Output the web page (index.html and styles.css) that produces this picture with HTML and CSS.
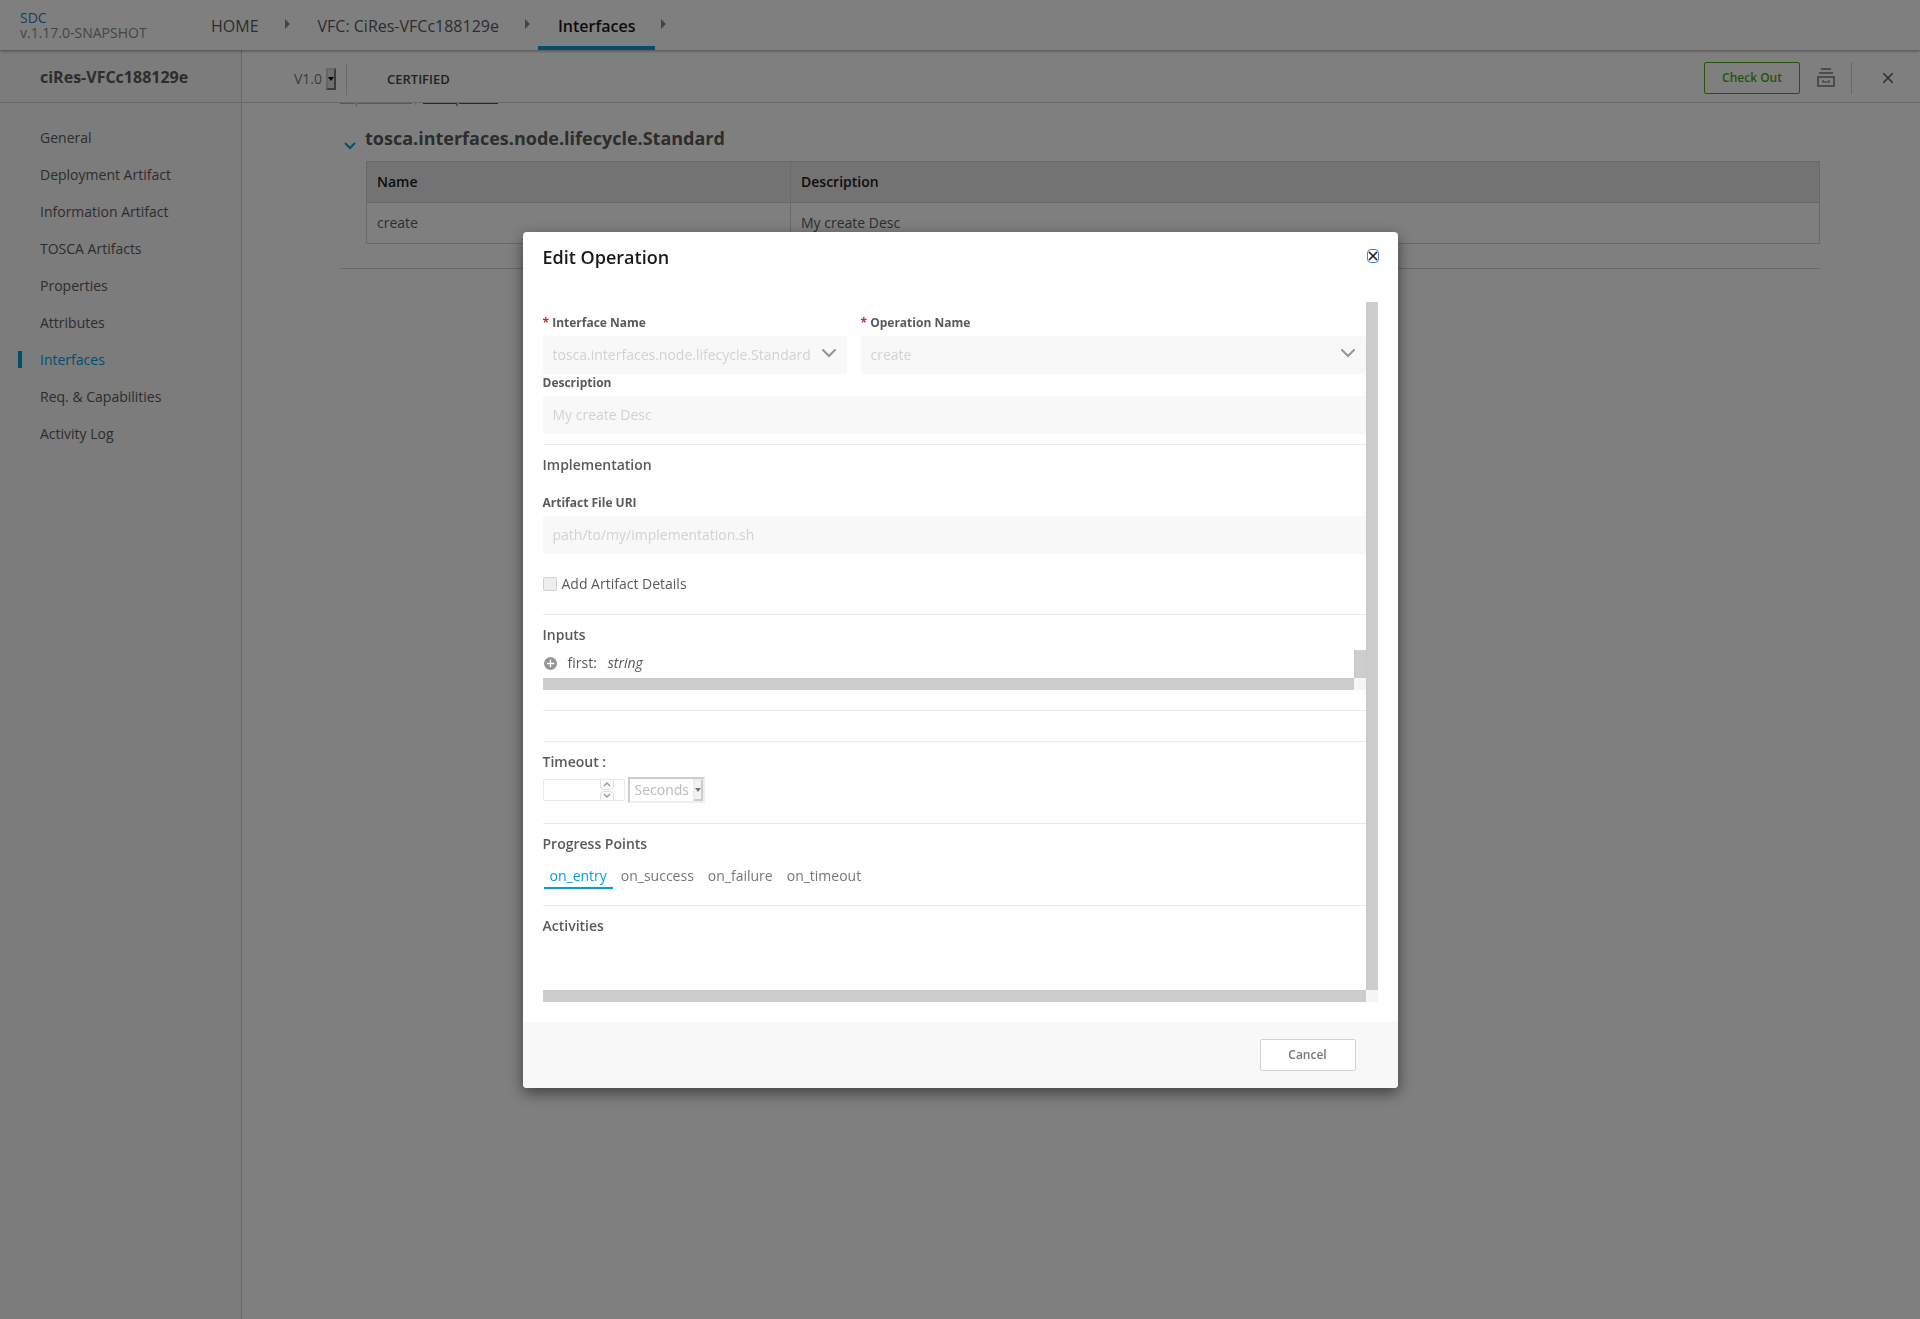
FILE: index.html
```html
<!DOCTYPE html>
<html lang="en">
<head>
    <meta charset="UTF-8">
    <meta name="viewport" content="width=device-width, initial-scale=1.0">
    <title>SDC - Interfaces</title>
    <link rel="stylesheet" href="styles.css">
</head>
<body>

    <header class="top-nav">
        <div class="brand">
            <a href="#">SDC</a>
            <span>v.1.17.0-SNAPSHOT</span>
        </div>
        <nav class="breadcrumbs">
            <a href="#">HOME</a>
            <i class="crumb-arrow"></i>
            <a href="#">VFC: CiRes-VFCc188129e</a>
            <i class="crumb-arrow"></i>
            <a href="#" class="active">Interfaces</a>
            <i class="crumb-arrow"></i>
        </nav>
    </header>

    <div class="workspace">
        <aside class="sidebar">
            <div class="sidebar-title">ciRes-VFCc188129e</div>
            <nav class="side-menu">
                <a href="#">General</a>
                <a href="#">Deployment Artifact</a>
                <a href="#">Information Artifact</a>
                <a href="#">TOSCA Artifacts</a>
                <a href="#">Properties</a>
                <a href="#">Attributes</a>
                <a href="#" class="active">Interfaces</a>
                <a href="#">Req. &amp; Capabilities</a>
                <a href="#">Activity Log</a>
            </nav>
        </aside>

        <div class="content">
            <div class="toolbar">
                <div class="version">
                    <select class="version-select" aria-label="Version">
                        <option>V1.0</option>
                    </select>
                    <span class="select-arrow"></span>
                </div>
                <span class="status">CERTIFIED</span>
                <div class="toolbar-actions">
                    <button type="button" class="btn-checkout">Check Out</button>
                    <button type="button" class="icon-btn" aria-label="Archive">
                        <svg width="18" height="19" viewBox="0 0 18 19" fill="none" stroke="#999" stroke-width="2">
                            <path d="M4 1h10M2 5h14"/>
                            <path d="M1 9h16v9H1z"/>
                            <path d="M6 12v2h6v-2" stroke-width="1.6"/>
                        </svg>
                    </button>
                    <span class="separator"></span>
                    <button type="button" class="icon-btn btn-close" aria-label="Close">
                        <svg width="10" height="10" viewBox="0 0 10 10" stroke="#5a5a5a" stroke-width="1.5">
                            <path d="M0 0l10 10M10 0L0 10"/>
                        </svg>
                    </button>
                </div>
            </div>

            <main class="main">
                <div class="view-tabs">
                    <svg width="158" height="3" viewBox="0 0 158 3">
                        <path d="M0 0h15v1H0zM18 0h54v1H18z" fill="#8fbfdb"/>
                        <path d="M16 0h1v3h-1z" fill="#8fbfdb"/>
                        <path d="M75 0h1v2h-1z" fill="#d2d2d2"/>
                        <path d="M83 0h33v1H83zM119 0h39v1h-39z" fill="#0568ae"/>
                        <path d="M116 0h2v3h-2z" fill="#5aa5d8"/>
                    </svg>
                </div>
                <h2 class="interface-title">
                    <svg width="12" height="8" viewBox="0 0 12 8" fill="none" stroke="#009fdb" stroke-width="2">
                        <path d="M1 1l5 5 5-5"/>
                    </svg>
                    tosca.interfaces.node.lifecycle.Standard
                </h2>
                <table class="operations">
                    <thead>
                        <tr><th>Name</th><th>Description</th></tr>
                    </thead>
                    <tbody>
                        <tr><td>create</td><td>My create Desc</td></tr>
                    </tbody>
                </table>
            </main>
        </div>
    </div>

    <div class="overlay">
        <div class="modal" role="dialog" aria-labelledby="modal-title">
            <div class="modal-header">
                <h1 id="modal-title">Edit Operation</h1>
                <button type="button" class="modal-close" aria-label="Close">
                    <svg width="10" height="10" viewBox="0 0 10 10" stroke="#191919" stroke-width="1.5">
                        <path d="M1 1l8 8M9 1L1 9"/>
                    </svg>
                </button>
            </div>

            <form class="modal-body">
                <div class="fields">
                    <div class="field-row">
                        <div class="field">
                            <label for="interface-name" class="required">Interface Name</label>
                            <div class="dropdown">
                                <select id="interface-name" disabled>
                                    <option>tosca.interfaces.node.lifecycle.Standard</option>
                                </select>
                                <svg width="14" height="9" viewBox="0 0 14 9" fill="none" stroke="#959595" stroke-width="2" stroke-linecap="round">
                                    <path d="M1 1l6 6 6-6"/>
                                </svg>
                            </div>
                        </div>
                        <div class="field wide">
                            <label for="operation-name" class="required">Operation Name</label>
                            <div class="dropdown">
                                <select id="operation-name" disabled>
                                    <option>create</option>
                                </select>
                                <svg width="14" height="9" viewBox="0 0 14 9" fill="none" stroke="#959595" stroke-width="2" stroke-linecap="round">
                                    <path d="M1 1l6 6 6-6"/>
                                </svg>
                            </div>
                        </div>
                    </div>
                    <div class="field">
                        <label for="description">Description</label>
                        <input type="text" id="description" value="My create Desc" disabled>
                    </div>

                    <section class="group implementation">
                        <h3>Implementation</h3>
                        <div class="field">
                            <label for="artifact-uri">Artifact File URI</label>
                            <input type="text" id="artifact-uri" value="path/to/my/implementation.sh" disabled>
                        </div>
                        <div class="check">
                            <input type="checkbox" id="artifact-details" disabled>
                            <label for="artifact-details">Add Artifact Details</label>
                        </div>
                    </section>

                    <section class="group inputs">
                        <h3>Inputs</h3>
                        <div class="input-tree">
                            <div class="tree-row">
                                <svg width="13" height="13" viewBox="0 0 14 14">
                                    <circle cx="7" cy="7" r="7" fill="#959595"/>
                                    <path d="M7 3v8M3 7h8" stroke="#fff" stroke-width="1.4"/>
                                </svg>
                                <span>first:</span>
                                <em>string</em>
                            </div>
                            <span class="track vertical"></span>
                            <span class="track horizontal"></span>
                            <span class="track-corner"></span>
                        </div>
                    </section>

                    <section class="group empty"></section>

                    <section class="group">
                        <h3>Timeout :</h3>
                        <div class="timeout">
                            <div class="number-box">
                                <input type="text" inputmode="numeric" aria-label="Timeout" disabled>
                                <svg width="14" height="20" viewBox="0 0 14 20" fill="none">
                                    <path d="M.5 0v6q0 3.500 3.500 3.500h6q3.500 0 3.500-3.500V0M.5 20v-5q0-3.500 3.500-3.500h6q3.500 0 3.500 3.500v5" stroke="#ddd"/>
                                    <path d="M4 6l3-3 3 3M4 14l3 3 3-3" stroke="#999" stroke-width="1.500"/>
                                </svg>
                            </div>
                            <div class="unit-box">
                                <select aria-label="Timeout unit" disabled>
                                    <option>Seconds</option>
                                </select>
                                <span class="select-arrow"></span>
                            </div>
                        </div>
                    </section>

                    <section class="group">
                        <h3>Progress Points</h3>
                        <div class="tabs">
                            <button type="button" class="tab active">on_entry</button>
                            <button type="button" class="tab">on_success</button>
                            <button type="button" class="tab">on_failure</button>
                            <button type="button" class="tab">on_timeout</button>
                        </div>
                    </section>

                    <section class="group activities">
                        <h3>Activities</h3>
                    </section>
                </div>
                <span class="track vertical"></span>
                <span class="track horizontal"></span>
                <span class="track-corner"></span>
            </form>

            <div class="modal-footer">
                <button type="button" class="btn-cancel">Cancel</button>
            </div>
        </div>
    </div>

</body>
</html>
```
FILE: styles.css
```css
* {
    box-sizing: border-box;
}

body {
    font-family: "Open Sans", Arial, sans-serif;
    font-size: 14px;
    line-height: 20px;
    color: #5a5a5a;
    background-color: white;
    margin: 0;
    min-height: 100vh;
    display: flex;
    flex-direction: column;
}

a {
    color: inherit;
    text-decoration: none;
}

button, input, select {
    font: inherit;
    color: inherit;
    margin: 0;
    padding: 0;
}

button {
    background: none;
    border: none;
    cursor: pointer;
}

select {
    appearance: none;
    background: none;
    border: none;
    border-radius: 0;
}

h1, h2, h3 {
    margin: 0;
}

svg {
    display: block;
    flex: none;
}

/* Top navigation */
.top-nav {
    display: flex;
    height: 50px;
    box-shadow: 0 1px 3px rgba(0, 0, 0, 0.4);
    position: relative;
}

.brand {
    width: 211px;
    padding: 10px 0 0 20px;
    line-height: 15px;
    color: #8a8a8a;
    display: flex;
    flex-direction: column;
}

    .brand a {
        color: #337ab7;
    }

.breadcrumbs {
    display: flex;
    align-items: stretch;
    font-size: 16px;
    line-height: 52px;
}

    .breadcrumbs a {
        padding: 0 20px;
    }

        .breadcrumbs a:first-child {
            padding-left: 0;
        }

        .breadcrumbs a.active {
            color: #191919;
            font-weight: 600;
            border-bottom: 4px solid #009fdb;
        }

.crumb-arrow {
    align-self: flex-start;
    margin: 19px 4px 0 6px;
    border: 5px solid transparent;
    border-left-color: #8a8a8a;
    border-right: none;
    width: 5px;
}

    .crumb-arrow + a {
        margin-left: 4px;
    }

/* Workspace */
.workspace {
    flex: 1;
    display: flex;
}

.sidebar {
    width: 242px;
    background-color: #f8f8f8;
    border-right: 1px solid #d2d2d2;
}

.sidebar-title {
    height: 53px;
    padding: 0 40px;
    line-height: 54px;
    font-size: 16px;
    font-weight: 700;
    border-bottom: 1px solid #d2d2d2;
}

.side-menu {
    padding-top: 26px;
}

    .side-menu a {
        display: flex;
        align-items: center;
        height: 17px;
        margin-bottom: 20px;
        padding-left: 40px;
    }

        .side-menu a.active {
            margin-left: 18px;
            padding-left: 18px;
            border-left: 4px solid #009fdb;
            color: #009fdb;
        }

.content {
    flex: 1;
}

.toolbar {
    display: flex;
    align-items: center;
    height: 53px;
    padding: 6px 27px 0 52px;
    border-bottom: 1px solid #d2d2d2;
}

.version {
    display: flex;
    align-items: center;
    height: 32px;
    padding-right: 10px;
    border-right: 1px solid #d2d2d2;
    color: #777;
}

.version-select {
    width: 32px;
}

.select-arrow {
    width: 10px;
    height: 22px;
    display: flex;
    align-items: center;
    justify-content: center;
    background-color: #e3e3e3;
    border: 2px outset #ccc;
}

    .select-arrow::after {
        content: "";
        border: 3px solid transparent;
        border-top: 4px solid black;
        border-bottom: none;
    }

.status {
    margin-left: 40px;
    font-size: 13px;
    font-weight: 600;
    color: #444;
}

.toolbar-actions {
    margin-left: auto;
    margin-top: -3px;
    display: flex;
    align-items: center;
}

.btn-checkout, .btn-cancel {
    width: 96px;
    height: 32px;
    font-size: 12px;
    font-weight: 600;
    border-radius: 2px;
}

.btn-checkout {
    color: #4ca90c;
    border: 1px solid #4ca90c;
}

.icon-btn {
    margin-left: 17px;
}

.separator {
    height: 32px;
    margin-left: 16px;
    border-left: 1px solid #d2d2d2;
}

.btn-close {
    margin-left: 31px;
}

.main {
    padding: 0 100px 0 98px;
}

.view-tabs {
    height: 23px;
}

.interface-title {
    display: flex;
    gap: 9px;
    font-size: 18px;
    font-weight: 700;
    line-height: 24px;
    padding-left: 4px;
}

    .interface-title svg {
        margin-top: 16px;
    }

.operations {
    width: calc(100% - 26px);
    margin: 11px 0 24px 26px;
    border-collapse: collapse;
    table-layout: fixed;
    color: #5a5a5a;
}

    .operations th, .operations td {
        height: 41px;
        padding: 0 10px;
        text-align: left;
        border: 1px solid #d2d2d2;
        font-weight: 400;
    }

    .operations th {
        width: 424px;
        background-color: #e6e6e6;
        color: #191919;
        font-weight: 600;
    }

        .operations th:last-child {
            width: auto;
        }

.main::after {
    content: "";
    display: block;
    border-top: 1px solid #d2d2d2;
}

/* Modal */
.overlay {
    position: fixed;
    inset: 0;
    display: flex;
    align-items: center;
    justify-content: center;
    background-color: rgba(0, 0, 0, 0.5);
}

.modal {
    width: 875px;
    max-width: 100%;
    background-color: white;
    border-radius: 4px;
    box-shadow: 0 5px 15px rgba(0, 0, 0, 0.5);
    overflow: hidden;
}

.modal-header {
    display: flex;
    justify-content: space-between;
    align-items: center;
    height: 50px;
    padding: 0 19px 0 20px;
}

    .modal-header h1 {
        font-size: 18px;
        font-weight: 600;
        color: #191919;
    }

.modal-close {
    border: 1px solid #3b82d6;
    border-radius: 4px;
    padding: 1px 0;
    margin-bottom: 2px;
}

.modal-body {
    display: grid;
    grid-template-columns: 1fr 12px;
    margin: 20px;
}

.track {
    background-color: #cdcdcd;
}

    .track.vertical {
        border-left: 1px solid #cdc7c2;
    }

    .track.horizontal {
        height: 12px;
        border-top: 1px solid #cdc7c2;
    }

.track-corner {
    background-color: #f6f5f3;
}

.fields {
    padding-top: 10px;
    min-width: 0;
}

.field-row {
    display: flex;
    gap: 14px;
}

.field {
    width: 304px;
    display: flex;
    flex-direction: column;
}

    .field.wide {
        flex: 1;
    }

    .fields > .field, .implementation .field {
        width: auto;
    }

    .field label {
        height: 22px;
        font-size: 12px;
        line-height: 18px;
        font-weight: 700;
    }

        .field label.required {
            height: 24px;
            line-height: 22px;
        }

            .field label.required::before {
                content: "* ";
                color: #cf2a2a;
            }

    .field input, .field select {
        width: 100%;
        height: 38px;
        padding: 0 10px;
        border: none;
        border-radius: 2px;
        background-color: #f8f8f8;
        color: #d2d2d2;
        opacity: 1;
    }

.dropdown {
    display: flex;
    align-items: center;
}

    .dropdown svg {
        margin: 0 11px 2px -25px;
    }

.group {
    border-top: 1px solid #eaeaea;
    padding-top: 10px;
    min-height: 82px;
}

    .field + .group {
        margin-top: 10px;
    }

    .group h3 {
        font-size: 14px;
        font-weight: 600;
        line-height: 20px;
    }

.implementation {
    height: 170px;
}

    .implementation .field {
        margin-top: 19px;
    }

.check {
    display: flex;
    align-items: center;
    gap: 5px;
    margin-top: 20px;
}

    .check input {
        appearance: none;
        width: 14px;
        height: 14px;
        background-color: #eee;
        border: 1px solid #d2d2d2;
        border-radius: 2px;
    }

.inputs {
    height: 96px;
}

.input-tree {
    display: grid;
    grid-template-columns: 1fr 12px;
    margin-top: 5px;
}

.tree-row {
    display: flex;
    align-items: center;
    height: 28px;
    padding: 0 0 1px 1px;
}

    .tree-row span {
        margin-left: 11px;
    }

    .tree-row em {
        margin-left: 11px;
    }

.group.empty {
    min-height: 31px;
    padding: 0;
}

.timeout {
    display: flex;
    align-items: center;
    gap: 3px;
    margin-top: 5px;
}

.number-box {
    display: flex;
    width: 82px;
    height: 22px;
    padding-right: 10px;
    border: 1px solid #eaeaea;
    border-radius: 2px;
}

    .number-box input {
        flex: 1;
        min-width: 0;
        border: none;
        background: none;
    }

.unit-box {
    display: flex;
    width: 77px;
    height: 26px;
    border: 2px solid;
    border-color: #ccc #eee #eee #ccc;
}

    .unit-box select {
        flex: 1;
        min-width: 0;
        padding-left: 5px;
        color: #bbb;
        opacity: 1;
    }

    .unit-box .select-arrow {
        background-color: #f3f3f3;
        border-color: #eee #ccc #ccc #eee;
        border-style: solid;
    }

        .unit-box .select-arrow::after {
            border-top-color: #777;
        }

.tabs {
    display: flex;
    margin-top: 12px;
    padding-left: 1px;
}

.tab {
    padding: 0 6px 1px;
    margin-right: 2px;
    border-bottom: 2px solid transparent;
    color: #777;
}

    .tab.active {
        color: #009fdb;
        border-bottom-color: #009fdb;
    }

.activities {
    min-height: 85px;
}

.modal-footer {
    display: flex;
    align-items: center;
    justify-content: flex-end;
    height: 66px;
    padding: 0 42px;
    background-color: #f8f8f8;
}

.btn-cancel {
    background-color: white;
    border: 1px solid #d2d2d2;
    color: #777;
}
```
